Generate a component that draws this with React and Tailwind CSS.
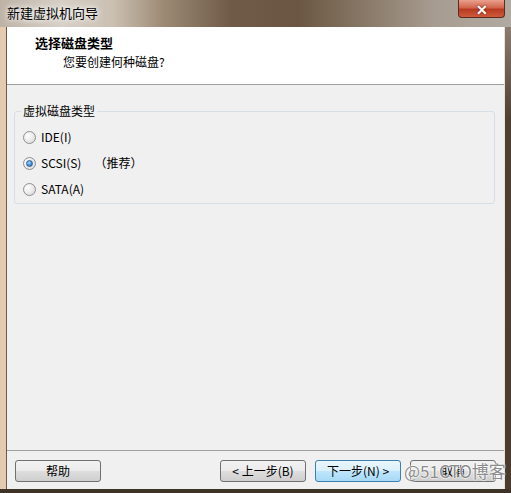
import React from "react";

const font = "font-['Noto_Sans_CJK_SC','Noto_Sans',sans-serif]";

const Radio = ({ checked, label, extra }) => (
  <label className="flex items-center h-[26px] pl-[8px] gap-[5px] text-[12px] leading-none text-black">
    <span className="w-[13px] h-[13px] rounded-full border border-[#8f8f8f] bg-[radial-gradient(circle_at_35%_35%,#ffffff_0%,#e6e6e6_60%,#cfcfcf_100%)] flex items-center justify-center">
      {checked && (
        <span className="w-[7px] h-[7px] rounded-full bg-[radial-gradient(circle_at_40%_35%,#a6dcff_0%,#3f8fd8_55%,#1e4f9c_100%)] border border-[#2d5f9e]" />
      )}
    </span>
    <span>{label}</span>
    {extra && <span className="ml-[8px]">{extra}</span>}
  </label>
);

const Button = ({ children, primary }) => (
  <button
    className={
      "w-[86px] h-[22px] rounded-[3px] border text-[12px] leading-none text-black " +
      (primary
        ? "border-[#3c7fb1] bg-[linear-gradient(180deg,#eaf6fd_0%,#d9f0fc_50%,#bee6fd_51%,#a7d9f5_100%)]"
        : "border-[#707070] bg-[linear-gradient(180deg,#f2f2f2_0%,#ebebeb_50%,#dddddd_51%,#cfcfcf_100%)]")
    }
  >
    {children}
  </button>
);

export default function App() {
  return (
    <div className={`${font} w-[511px] h-[493px] flex flex-col relative overflow-hidden bg-[#4c3d2f]`}>
      {/* title bar */}
      <div className="h-[27px] flex items-start justify-between bg-[linear-gradient(90deg,#bdb2a5_0%,#d6cfc6_12%,#cbc0b2_22%,#9d8a75_32%,#6f5b47_45%,#6a5642_58%,#8a7a69_72%,#a79c90_85%,#b1aaa2_100%)]">
        <div className="pl-[7px] pt-[5px] text-[13px] leading-[16px] text-black [text-shadow:0_0_8px_#ffffff,0_0_4px_#ffffff]">
          新建虚拟机向导
        </div>
        <div className="mr-[6px] w-[47px] h-[18px] rounded-b-[4px] border border-t-0 border-[#5b2a20] bg-[linear-gradient(180deg,#e9a08e_0%,#d2654c_45%,#b83a22_55%,#cf5a3a_100%)] flex items-center justify-center">
          <span className="text-white text-[14px] font-bold leading-none [text-shadow:0_0_2px_#5a1a10]">✕</span>
        </div>
      </div>

      <div className="flex-1 flex">
        {/* left frame */}
        <div className="w-[7px] bg-[#e4cbaf] border-r border-[#6b5a4a]" />

        {/* client */}
        <div className="flex-1 flex flex-col bg-[#f0f0f0]">
          <div className="h-[58px] bg-white border-b border-[#a0a0a0] flex flex-col">
            <div className="pl-[28px] pt-[8px] text-[13px] font-bold leading-[16px] text-black">选择磁盘类型</div>
            <div className="pl-[56px] pt-[3px] text-[12px] leading-[16px] text-black">您要创建何种磁盘?</div>
          </div>

          <div className="flex-1 px-[7px]">
            <fieldset className="mt-[18px] w-[481px] border border-[#d5dfe5] rounded-[3px] px-0 pb-[1px]">
              <legend className="ml-[6px] px-[2px] text-[12px] leading-[16px] text-black">虚拟磁盘类型</legend>
              <div className="pt-[5px] flex flex-col">
                <Radio label="IDE(I)" />
                <Radio checked label="SCSI(S)" extra="（推荐）" />
                <Radio label="SATA(A)" />
              </div>
            </fieldset>
          </div>

          <div className="h-[39px] border-t border-[#a0a0a0] flex items-start pt-[9px] pl-[8px]">
            <Button>帮助</Button>
            <div className="ml-[119px] flex gap-[9px]">
              <Button>&lt; 上一步(B)</Button>
              <Button primary>下一步(N) &gt;</Button>
              <Button>取消</Button>
            </div>
          </div>
        </div>

        {/* right frame */}
        <div className="w-[7px] bg-[linear-gradient(180deg,#8a7c70_0%,#4e3f31_20%,#4a3b2d_100%)] border-l border-[#e8e2da]" />
      </div>

      {/* bottom frame */}
      <div className="h-[4px] bg-[#3f3226]" />

      {/* watermark */}
      <div className="absolute left-[404px] top-[460px] text-[17px] leading-[22px] text-[#8c8c8c] [text-shadow:0_0_2px_#ffffff,0_0_2px_#ffffff,0_0_1px_#ffffff]">
        @51CTO博客
      </div>
    </div>
  );
}
